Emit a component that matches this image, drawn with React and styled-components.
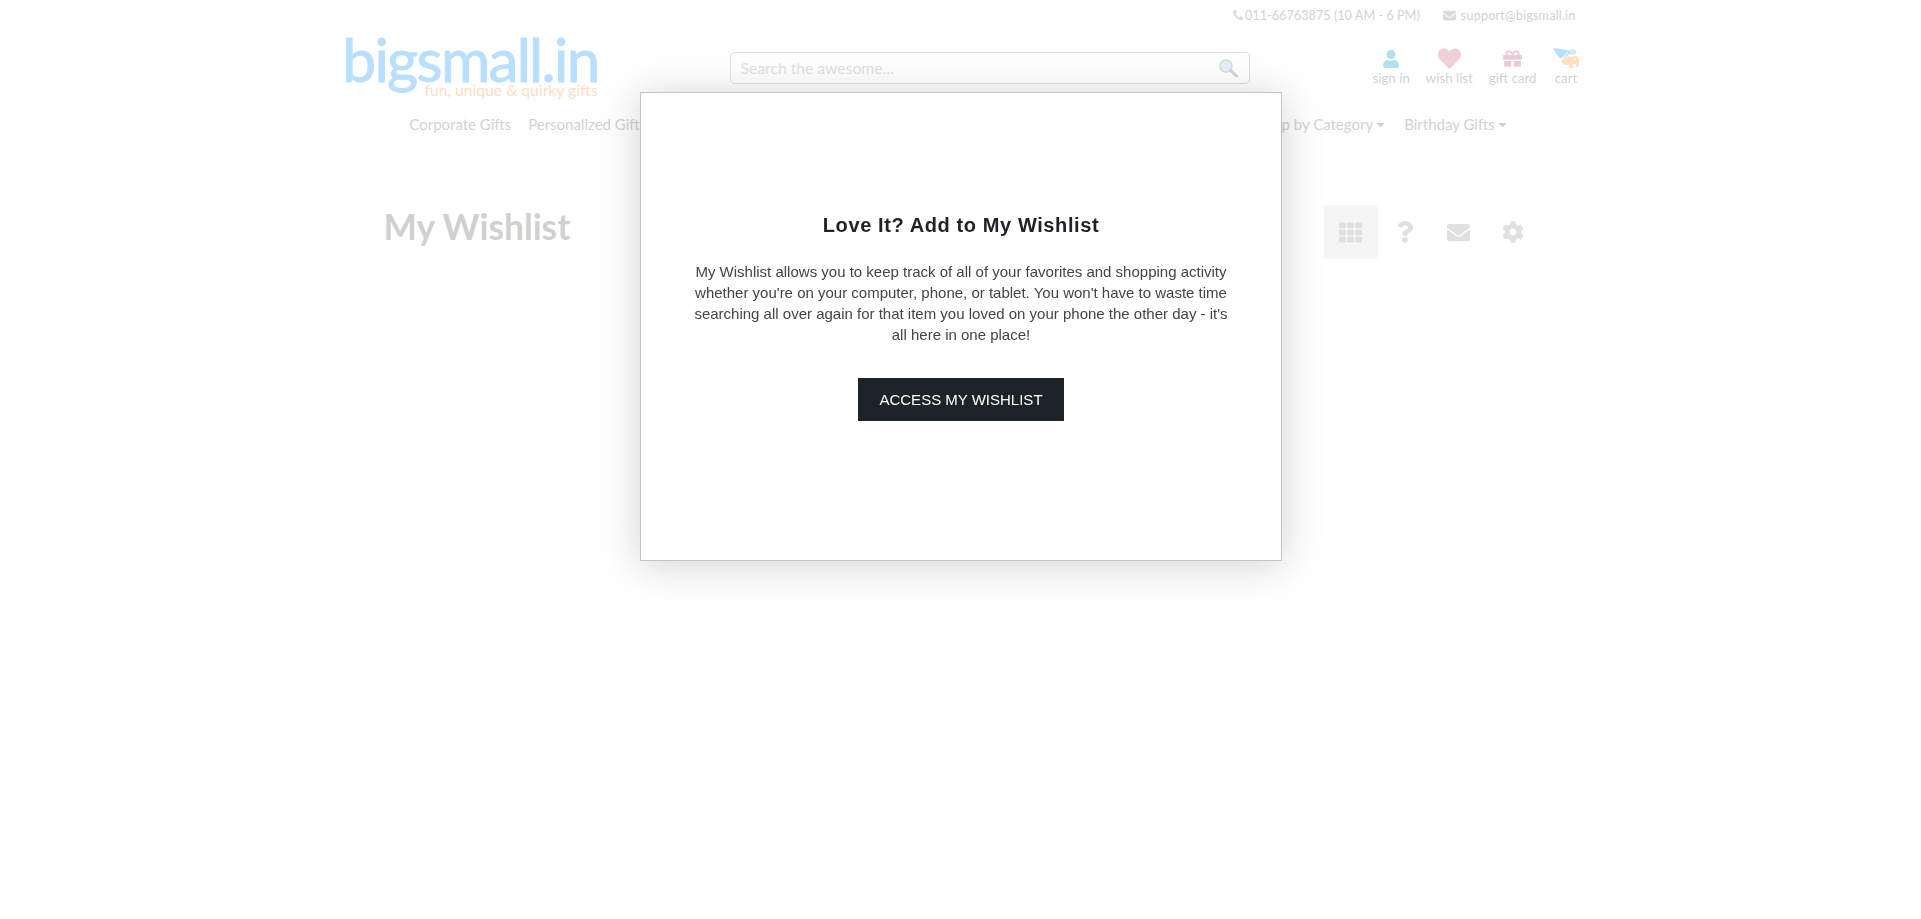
import styled, { createGlobalStyle } from 'styled-components';
import { FaPhone, FaEnvelope, FaUser, FaHeart, FaGift, FaTh, FaQuestion, FaCog, FaCaretDown } from 'react-icons/fa';

const Global = createGlobalStyle`
  html, body { margin: 0; padding: 0; background: #fff; }
  body { font-family: Lato, "Liberation Sans", sans-serif; color: #333; min-height: 919px; }
`;

const Page = styled.div`
  width: 1250px;
  margin: 0 auto;
  padding: 0 6px 0 10px;
  box-sizing: border-box;
`;

const TopBar = styled.div`
  height: 30px;
  display: flex;
  justify-content: flex-end;
  align-items: center;
  gap: 23px;
  font-size: 12.7px;
  color: #666;
  padding-right: 4px;
`;

const Contact = styled.span`
  display: inline-flex;
  align-items: center;
  gap: ${({ $gap }) => $gap}px;
  letter-spacing: ${({ $track }) => $track || 0}px;
  svg { color: #888; }
`;

const Masthead = styled.div`
  height: 76px;
  display: flex;
  align-items: flex-start;
`;

const Logo = styled.div`
  width: 255px;
  height: 70px;
  position: relative;
  flex: none;
  margin-left: -3px;
`;

const LogoWord = styled.div`
  font-size: 60px;
  line-height: 60px;
  font-weight: 400;
  letter-spacing: -1.7px;
  color: #1694ff;
  -webkit-text-stroke: 1px #1694ff;
  white-space: nowrap;
  margin-top: -1px;
`;

const LogoTag = styled.div`
  position: absolute;
  right: 0;
  top: 52px;
  font-size: 15.7px;
  line-height: 16px;
  font-weight: 400;
  color: #ff8a3a;
  white-space: nowrap;
`;

const Search = styled.div`
  width: 520px;
  height: 32px;
  margin: 22px 0 0 132px;
  border: 1px solid #969696;
  border-radius: 5px;
  box-sizing: border-box;
  display: flex;
  align-items: center;
  justify-content: space-between;
  padding: 0 11px 0 10px;
  font-size: 15.7px;
  color: #969696;
`;

const Actions = styled.div`
  margin-left: auto;
  display: flex;
  align-items: flex-start;
  gap: 16px;
  padding-top: 17px;
`;

const Action = styled.div`
  display: flex;
  flex-direction: column;
  align-items: center;
  font-size: 13.3px;
  line-height: 16px;
  color: #666;
  svg { display: block; }
`;

const ActionIcon = styled.div`
  height: 23px;
  display: flex;
  align-items: center;
  color: ${({ $color }) => $color};
`;

const Nav = styled.nav`
  display: flex;
  justify-content: center;
  gap: 17px;
  font-size: 15px;
  line-height: 20px;
  color: #666;
  height: 36px;
  align-items: center;
  padding-right: 7px;
  box-sizing: border-box;
`;

const NavItem = styled.span`
  display: inline-flex;
  align-items: center;
  gap: 1px;
  white-space: nowrap;
`;

const TitleRow = styled.div`
  display: flex;
  justify-content: space-between;
  align-items: flex-start;
  padding: 63px 40px 0 38px;
`;

const Title = styled.h1`
  margin: 0;
  font-size: 35.3px;
  line-height: 44px;
  font-weight: 700;
  color: #626262;
`;

const Tools = styled.div`
  display: flex;
`;

const Tool = styled.div`
  width: 54px;
  height: 54px;
  display: flex;
  align-items: center;
  justify-content: center;
  color: #989898;
  background: ${({ $active }) => ($active ? '#dedede' : 'transparent')};
`;

const Overlay = styled.div`
  position: fixed;
  inset: 0;
  background: rgba(255, 255, 255, 0.7);
`;

const Modal = styled.div`
  position: absolute;
  left: 640px;
  top: 92px;
  width: 642px;
  height: 469px;
  box-sizing: border-box;
  padding-bottom: 20px;
  background: #fff;
  border: 1px solid #c4c4c4;
  box-shadow: 0 4px 40px rgba(0, 0, 0, 0.18);
  display: flex;
  flex-direction: column;
  align-items: center;
  justify-content: center;
  font-family: "Liberation Sans", Arial, sans-serif;
  text-align: center;
`;

const ModalTitle = styled.h2`
  margin: 0 0 24px;
  font-size: 20px;
  line-height: 24px;
  font-weight: 700;
  letter-spacing: 0.6px;
  color: #1e2329;
`;

const ModalText = styled.p`
  margin: 0 0 33px;
  width: 540px;
  font-size: 15px;
  line-height: 21px;
  color: #444;
`;

const ModalButton = styled.button`
  width: 206px;
  height: 43px;
  border: 0;
  background: #1e2329;
  color: #fff;
  font: 15px "Liberation Sans", Arial, sans-serif;
  text-transform: uppercase;
`;

const SearchGlass = () => (
  <svg width="20" height="20" viewBox="0 0 20 20">
    <circle cx="8" cy="8" r="6" fill="#9fd2f7" stroke="#808080" strokeWidth="1.6" />
    <path d="M12.5 12.5L18.5 18" stroke="#707070" strokeWidth="3" strokeLinecap="round" />
  </svg>
);

const CartElephant = () => (
  <svg width="27" height="23" viewBox="0 0 27 23">
    <path d="M0 1L15 3L19 6L8 12L4 8Z" fill="#1694ff" />
    <path d="M8 12L15 5" stroke="#fff" strokeWidth="1" />
    <circle cx="20" cy="5" r="3" fill="#5fc0e8" />
    <path d="M8 15C9 11 15 8 19 10C23 7 27 10 26 15V20H23V17H20V21H16V18H13C10 18 10 15 8 15Z" fill="#ff9e2c" />
    <circle cx="22" cy="12" r="1" fill="#fff" />
  </svg>
);

const navItems = [
  { label: 'Corporate Gifts' },
  { label: 'Personalized Gifts' },
  { label: 'Gifts for Him', caret: true },
  { label: 'Gifts for Her', caret: true },
  { label: 'Home & Living', caret: true },
  { label: 'New Arrivals' },
  { label: 'Hampers' },
  { label: 'Lamps' },
  { label: 'Shop by Category', caret: true },
  { label: 'Birthday Gifts', caret: true },
];

const actions = [
  { label: 'sign in', color: '#0097c6', icon: <FaUser size={18} /> },
  { label: 'wish list', color: '#c96276', icon: <FaHeart size={23} /> },
  { label: 'gift card', color: '#c4506a', icon: <FaGift size={19} /> },
];

export default function App() {
  return (
    <>
      <Global />
      <Page>
        <TopBar>
          <Contact $gap={2}><FaPhone size={10} style={{ transform: 'scaleX(-1)' }} />011-66763875 (10 AM - 6 PM)</Contact>
          <Contact $gap={5} $track={0.15}><FaEnvelope size={13} />support@bigsmall.in</Contact>
        </TopBar>
        <Masthead>
          <Logo>
            <LogoWord>bigsmall.in</LogoWord>
            <LogoTag>fun, unique &amp; quirky gifts</LogoTag>
          </Logo>
          <Search>
            Search the awesome...
            <SearchGlass />
          </Search>
          <Actions>
            {actions.map((a) => (
              <Action key={a.label}>
                <ActionIcon $color={a.color}>{a.icon}</ActionIcon>
                {a.label}
              </Action>
            ))}
            <Action>
              <ActionIcon><CartElephant /></ActionIcon>
              cart
            </Action>
          </Actions>
        </Masthead>
        <Nav>
          {navItems.map((n) => (
            <NavItem key={n.label}>
              {n.label}
              {n.caret && <FaCaretDown size={13} />}
            </NavItem>
          ))}
        </Nav>
        <TitleRow>
          <Title>My Wishlist</Title>
          <Tools>
            <Tool $active><FaTh size={23} /></Tool>
            <Tool><FaQuestion size={22} /></Tool>
            <Tool><FaEnvelope size={23} /></Tool>
            <Tool><FaCog size={22} /></Tool>
          </Tools>
        </TitleRow>
      </Page>
      <Overlay>
        <Modal>
          <ModalTitle>Love It? Add to My Wishlist</ModalTitle>
          <ModalText>
            My Wishlist allows you to keep track of all of your favorites and shopping activity
            whether you're on your computer, phone, or tablet. You won't have to waste time
            searching all over again for that item you loved on your phone the other day - it's
            all here in one place!
          </ModalText>
          <ModalButton>Access My Wishlist</ModalButton>
        </Modal>
      </Overlay>
    </>
  );
}
